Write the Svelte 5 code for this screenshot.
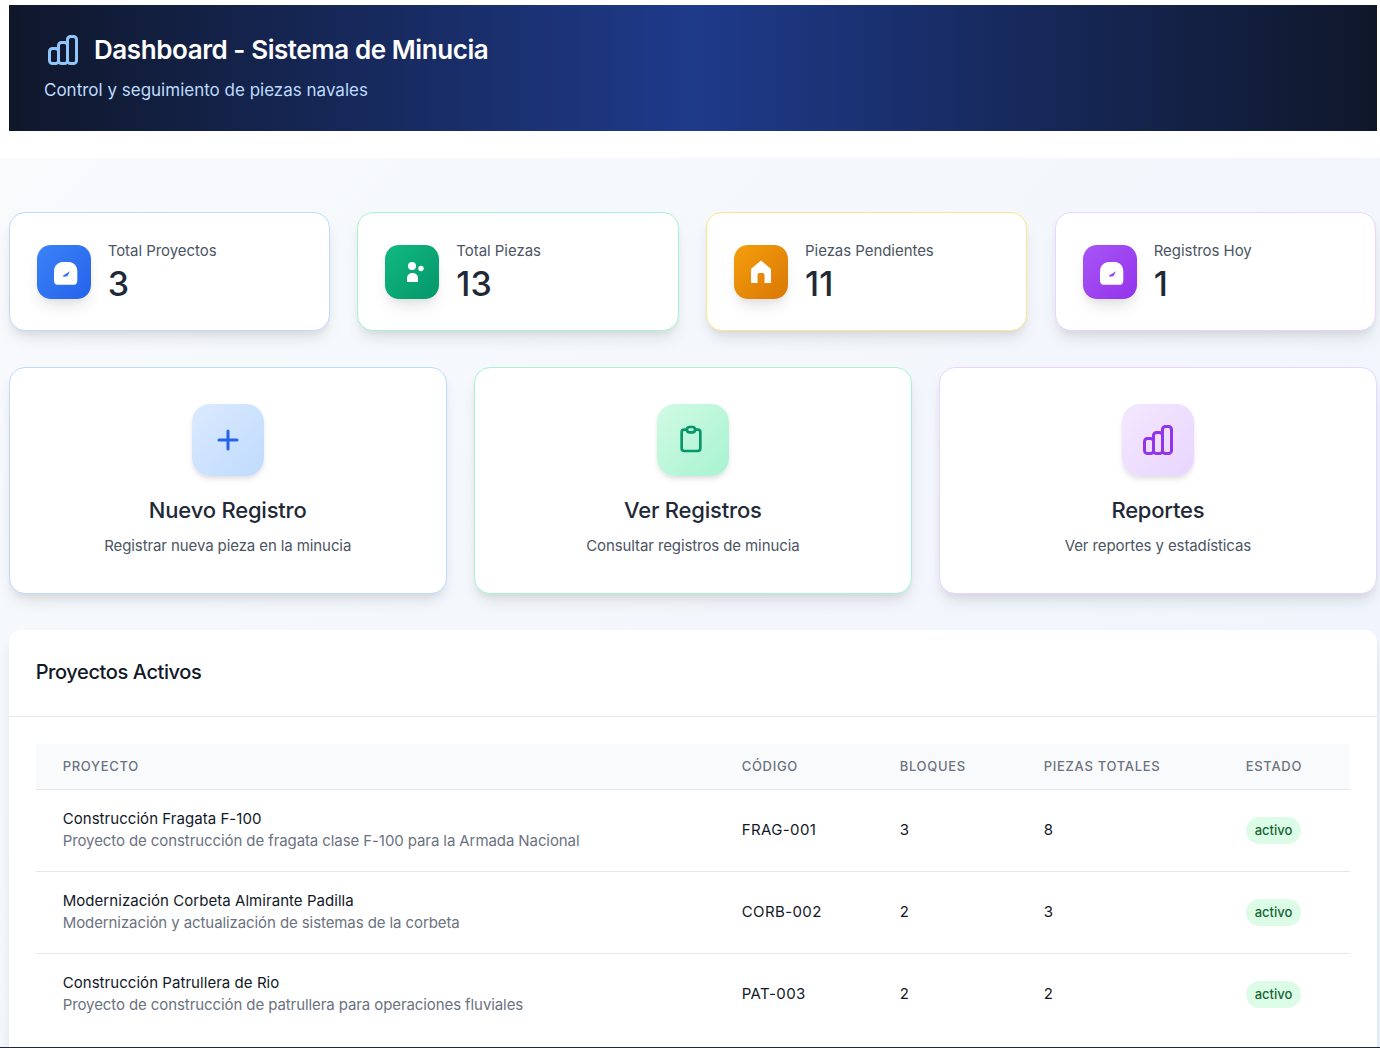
<script lang="ts">
  const chartPath =
    "M9 19v-6a2 2 0 00-2-2H5a2 2 0 00-2 2v6a2 2 0 002 2h2a2 2 0 002-2zm0 0V9a2 2 0 012-2h2a2 2 0 012 2v10m-6 0a2 2 0 002 2h2a2 2 0 002-2m0 0V5a2 2 0 012-2h2a2 2 0 012 2v14a2 2 0 01-2 2h-2a2 2 0 01-2-2z";

  const stats = [
    { label: "Total Proyectos", value: 3, tone: "blue", icon: "gauge" },
    { label: "Total Piezas", value: 13, tone: "green", icon: "people" },
    { label: "Piezas Pendientes", value: 11, tone: "orange", icon: "home" },
    { label: "Registros Hoy", value: 1, tone: "purple", icon: "gauge" },
  ];

  const actions = [
    { title: "Nuevo Registro", desc: "Registrar nueva pieza en la minucia", tone: "blue", icon: "plus" },
    { title: "Ver Registros", desc: "Consultar registros de minucia", tone: "green", icon: "clipboard" },
    { title: "Reportes", desc: "Ver reportes y estadísticas", tone: "purple", icon: "chart" },
  ];

  const projects = [
    {
      name: "Construcción Fragata F-100",
      desc: "Proyecto de construcción de fragata clase F-100 para la Armada Nacional",
      code: "FRAG-001",
      blocks: 3,
      pieces: 8,
    },
    {
      name: "Modernización Corbeta Almirante Padilla",
      desc: "Modernización y actualización de sistemas de la corbeta",
      code: "CORB-002",
      blocks: 2,
      pieces: 3,
    },
    {
      name: "Construcción Patrullera de Rio",
      desc: "Proyecto de construcción de patrullera para operaciones fluviales",
      code: "PAT-003",
      blocks: 2,
      pieces: 2,
    },
  ];
</script>

<div class="page">
  <header class="hero">
    <h1>
      <svg class="hero-icon" viewBox="0 0 24 24" fill="none" stroke="currentColor" stroke-width="2" stroke-linecap="round" stroke-linejoin="round">
        <path d={chartPath} />
      </svg>
      Dashboard - Sistema de Minucia
    </h1>
    <p>Control y seguimiento de piezas navales</p>
  </header>

  <main class="content">
    <section class="stats">
      {#each stats as stat}
        <div class="stat {stat.tone}">
          <div class="stat-icon">
            <svg viewBox="0 0 24 24" fill="currentColor">
              {#if stat.icon === "gauge"}
                <path
                  transform="translate(2 2)"
                  fill-rule="evenodd"
                  d="M7.700 0H16Q23.300 2 23.300 9.300V17.700Q23.300 22.700 20 22.700H3.300Q0 22.700 0 17.700V9.300Q0 2 7.700 0zM8.700 13.700 16 9.300l-2.700 5-3.300.4z"
                />
              {:else if stat.icon === "people"}
                <circle cx="12" cy="6" r="4" />
                <circle cx="21" cy="8.500" r="2.700" />
                <path d="M7 22v-4c0-3 2.500-5 5.500-5s5.500 2 5.500 5v4z" />
              {:else if stat.icon === "home"}
                <path d="M12 .5 22 9v14h-6.500v-8q0-2-2-2h-3q-2 0-2 2v8H2V9z" />
              {/if}
            </svg>
          </div>
          <div class="stat-text">
            <div class="stat-label">{stat.label}</div>
            <div class="stat-value">{stat.value}</div>
          </div>
        </div>
      {/each}
    </section>

    <section class="actions">
      {#each actions as action}
        <div class="action {action.tone}">
          <div class="action-icon">
            <svg viewBox="0 0 24 24" fill="none" stroke="currentColor" stroke-width="2" stroke-linecap="round" stroke-linejoin="round">
              {#if action.icon === "plus"}
                <path d="M12 6v6m0 0v6m0-6h6m-6 0H6" />
              {:else if action.icon === "clipboard"}
                <path d="M9 5H7a2 2 0 00-2 2v12a2 2 0 002 2h10a2 2 0 002-2V7a2 2 0 00-2-2h-2M9 5a2 2 0 002 2h2a2 2 0 002-2M9 5a2 2 0 012-2h2a2 2 0 012 2" />
              {:else}
                <path d={chartPath} />
              {/if}
            </svg>
          </div>
          <h3>{action.title}</h3>
          <p>{action.desc}</p>
        </div>
      {/each}
    </section>

    <section class="projects">
      <h2>Proyectos Activos</h2>
      <div class="table-wrap">
        <table>
          <thead>
            <tr>
              <th class="col-name">Proyecto</th>
              <th class="col-code">Código</th>
              <th class="col-blocks">Bloques</th>
              <th class="col-pieces">Piezas Totales</th>
              <th>Estado</th>
            </tr>
          </thead>
          <tbody>
            {#each projects as project}
              <tr>
                <td>
                  <div class="project-name">{project.name}</div>
                  <div class="project-desc">{project.desc}</div>
                </td>
                <td class="code">{project.code}</td>
                <td>{project.blocks}</td>
                <td>{project.pieces}</td>
                <td class="status"><span class="badge">activo</span></td>
              </tr>
            {/each}
          </tbody>
        </table>
      </div>
    </section>
  </main>
</div>

<style>
  :global(body) {
    margin: 0;
    background: #fff;
  }

  .page {
    height: 1048px;
    box-sizing: border-box;
    overflow: hidden;
    padding-top: 5px;
    border-bottom: 1px solid #1f2937;
    font-family: Inter, "Liberation Sans", sans-serif;
    color: #1f2937;
  }

  .hero {
    margin: 0 3px 27px 9px;
    height: 126px;
    box-sizing: border-box;
    padding: 27px 35px 0;
    background: linear-gradient(90deg, #0f172a 0%, #1e3a8a 50%, #0f172a 100%);
  }

  .hero h1 {
    display: flex;
    align-items: center;
    gap: 13px;
    margin: 0;
    font-size: 26px;
    line-height: 36px;
    font-weight: 600;
    letter-spacing: -0.43px;
    color: #fff;
  }

  .hero-icon {
    width: 36px;
    height: 36px;
    margin-left: 1px;
    color: #93c5fd;
  }

  .hero p {
    margin: 9px 0 0;
    font-size: 17px;
    line-height: 26px;
    color: #bfdbfe;
  }

  .content {
    padding: 54px 3px 0 8.7px;
    height: 900px;
    background: linear-gradient(135deg, #f8fafc 0%, #eef4fd 100%);
  }

  .stats {
    display: grid;
    grid-template-columns: repeat(4, 1fr);
    gap: 27.5px;
    margin-right: 1.1px;
  }

  .stat {
    display: flex;
    align-items: center;
    gap: 17px;
    height: 119px;
    box-sizing: border-box;
    padding: 0 27px;
    background: #fff;
    border: 1px solid;
    border-radius: 16px;
    box-shadow: 0 10px 15px -3px rgba(0, 0, 0, 0.1), 0 4px 6px -2px rgba(0, 0, 0, 0.05);
  }

  .stat.blue { border-color: #bfdbfe; }
  .stat.green { border-color: #a7f3d0; }
  .stat.orange { border-color: #fde68a; }
  .stat.purple { border-color: #e9d5ff; }

  .stat-icon {
    display: flex;
    align-items: center;
    justify-content: center;
    width: 54px;
    height: 54px;
    border-radius: 14px;
    color: #fff;
    box-shadow: 0 10px 15px -3px rgba(0, 0, 0, 0.1), 0 4px 6px -2px rgba(0, 0, 0, 0.05);
  }

  .blue .stat-icon { background: linear-gradient(135deg, #3b82f6, #2563eb); }
  .green .stat-icon { background: linear-gradient(135deg, #10b981, #059669); }
  .orange .stat-icon { background: linear-gradient(135deg, #f59e0b, #d97706); }
  .purple .stat-icon { background: linear-gradient(135deg, #a855f7, #9333ea); }

  .stat-icon svg {
    width: 24px;
    height: 24px;
    overflow: visible;
  }

  .stat-label {
    font-size: 15px;
    line-height: 21px;
    letter-spacing: -0.05px;
    color: #4b5563;
  }

  .stat-value {
    margin-top: 3px;
    font-size: 34px;
    line-height: 40px;
    font-weight: 500;
    color: #1f2937;
  }

  .actions {
    display: grid;
    grid-template-columns: repeat(3, 1fr);
    gap: 27px;
    margin-top: 36px;
  }

  .action {
    height: 227px;
    box-sizing: border-box;
    padding-top: 36px;
    text-align: center;
    background: #fff;
    border: 1px solid;
    border-radius: 16px;
    box-shadow: 0 10px 15px -3px rgba(0, 0, 0, 0.1), 0 4px 6px -2px rgba(0, 0, 0, 0.05);
  }

  .action.blue { border-color: #bfdbfe; }
  .action.green { border-color: #a7f3d0; }
  .action.purple { border-color: #e9d5ff; }

  .action-icon {
    display: flex;
    align-items: center;
    justify-content: center;
    width: 72px;
    height: 72px;
    margin: 0 auto;
    border-radius: 18px;
    box-shadow: 0 4px 6px -1px rgba(0, 0, 0, 0.1), 0 2px 4px -1px rgba(0, 0, 0, 0.06);
  }

  .action.blue .action-icon { background: linear-gradient(135deg, #dbeafe, #bfdbfe); color: #2563eb; }
  .action.green .action-icon { background: linear-gradient(135deg, #d1fae5, #a7f3d0); color: #059669; }
  .action.purple .action-icon { background: linear-gradient(135deg, #f3e8ff, #e9d5ff); color: #9333ea; }

  .action-icon svg {
    width: 36px;
    height: 36px;
  }

  .action.green .action-icon svg {
    width: 32px;
    height: 32px;
    margin: 0 3px 2px 0;
  }

  .action h3 {
    margin: 18px 0 0;
    font-size: 22px;
    line-height: 32px;
    font-weight: 550;
    letter-spacing: -0.2px;
    color: #1f2937;
  }

  .action p {
    margin: 9px 0 0;
    font-size: 15px;
    line-height: 22px;
    letter-spacing: -0.1px;
    color: #4b5563;
  }

  .projects {
    margin-top: 36px;
    background: #fff;
    border-radius: 12px 12px 0 0;
    box-shadow: 0 10px 15px -3px rgba(0, 0, 0, 0.1), 0 4px 6px -2px rgba(0, 0, 0, 0.05);
  }

  .projects h2 {
    margin: 0;
    height: 87px;
    box-sizing: border-box;
    padding: 26px 27px 0;
    font-size: 20px;
    line-height: 32px;
    font-weight: 500;
    letter-spacing: -0.4px;
    color: #111827;
    border-bottom: 1px solid #e5e7eb;
  }

  .table-wrap {
    padding: 27px;
  }

  table {
    width: 100%;
    table-layout: fixed;
    border-collapse: collapse;
    font-size: 15px;
  }

  .col-name { width: 679px; }
  .col-code { width: 158px; }
  .col-blocks { width: 144px; }
  .col-pieces { width: 202px; }

  th {
    box-sizing: border-box;
    height: 45px;
    padding: 0 27px 1px;
    text-align: left;
    font-size: 13px;
    font-weight: 500;
    letter-spacing: 0.7px;
    text-transform: uppercase;
    color: #6b7280;
    background: #f9fafb;
    border-bottom: 1px solid #e5e7eb;
  }

  td {
    box-sizing: border-box;
    height: 82px;
    padding: 0 27px 1px;
    color: #111827;
    letter-spacing: -0.09px;
    border-bottom: 1px solid #e5e7eb;
  }

  td.code {
    letter-spacing: 0.4px;
  }

  td.status {
    padding-bottom: 0;
  }

  tbody tr:last-child td {
    border-bottom: 0;
  }

  .project-name {
    line-height: 22px;
    letter-spacing: 0.05px;
  }

  .project-desc {
    line-height: 22px;
    color: #6b7280;
  }

  .badge {
    display: inline-block;
    padding: 0 9px;
    font-size: 13px;
    line-height: 27px;
    font-weight: 500;
    letter-spacing: 0;
    color: #166534;
    background: #dcfce7;
    border-radius: 14px;
  }
</style>
